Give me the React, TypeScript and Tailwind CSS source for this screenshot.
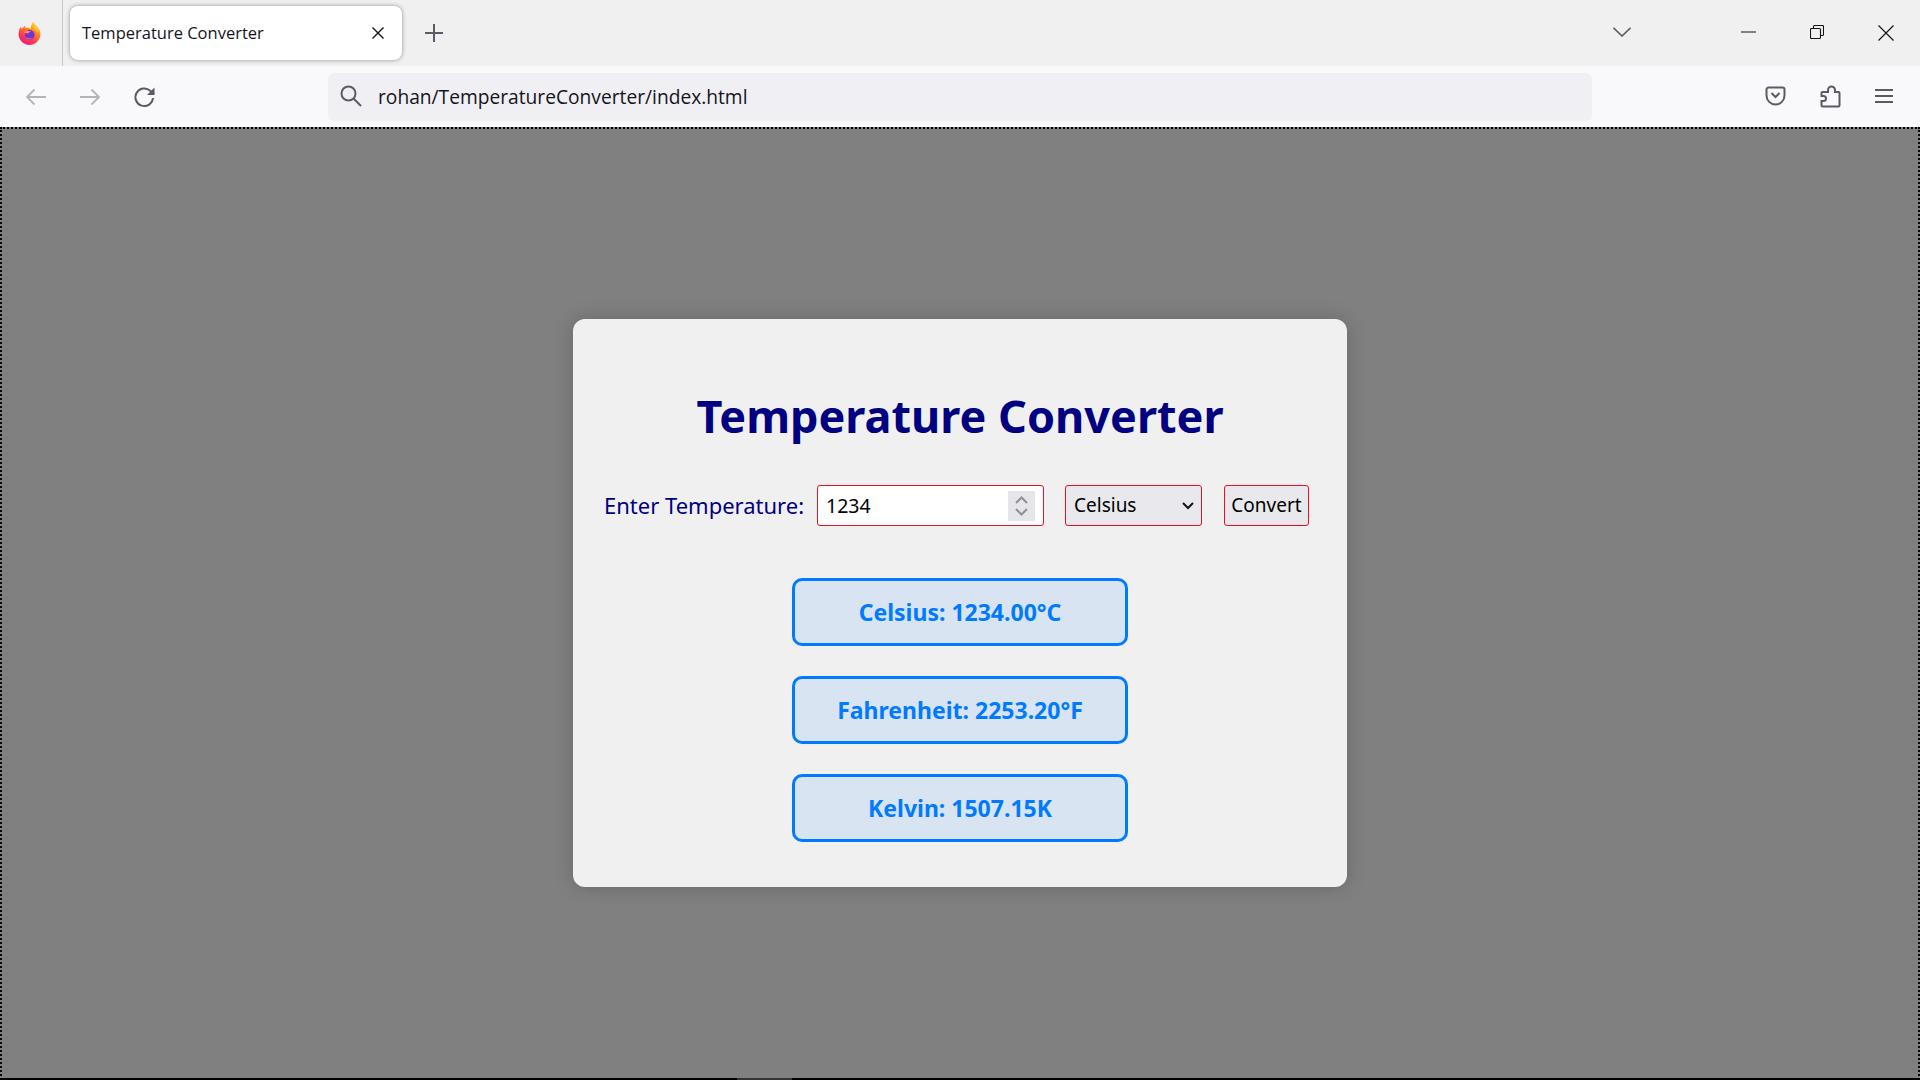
const FirefoxLogo = () => (
  <svg width="25" height="25" viewBox="0 0 24 24">
    <defs>
      <linearGradient id="ffBody" x1="0.8" y1="0" x2="0.2" y2="1">
        <stop offset="0" stopColor="#ffe226" />
        <stop offset="0.35" stopColor="#ff8a1f" />
        <stop offset="0.7" stopColor="#ff3750" />
        <stop offset="1" stopColor="#e31587" />
      </linearGradient>
    </defs>
    <path
      d="M16 1c.6 2.200 2 2.800 3.600 4.700 1.700 2.100 2.900 4.100 2.900 6.800 0 5.800-4.700 10.500-10.500 10.500s-10.500-4.700-10.500-10.500c0-2.600 .8-5 2.200-6.900 .2 1 .6 1.600 1.200 2 .6-1.600 1.900-2.700 3.600-3.100-.7 1-.7 1.800-.4 2.500 1.800-.9 3.600-.4 5 .6 .4-2.500 .8-4.800 2.400-6.600z"
      fill="url(#ffBody)"
    />
    <path d="M16.500 4c2.700 2.200 4.400 5 4 8.500-.5-2.600-2-4.500-4-6z" fill="#ffd23a" />
    <circle cx="12.200" cy="13.400" r="4.700" fill="#7233d6" />
    <path d="M6.500 11c2-1.500 5-1.800 7-.8-1.400.1-2.400.8-2.800 1.800-1.500-.3-2.900-.5-4.200-1z" fill="#ff9b2e" />
    <path d="M8 15.500c1.500 2.300 5.300 3 7.700 .8-2 .8-5 .5-7.700-.8z" fill="#ff5f8f" />
  </svg>
);

const Row = ({ label }: { label: string }) => (
  <div className="flex items-center justify-center w-[336px] h-[68px] rounded-[10px] border-[3px] border-[#007bff] bg-[#d8e4f2] text-[#007bff] text-[23px] font-bold leading-none">
    {label}
  </div>
);

const App = () => {
  return (
    <div className="relative flex flex-col w-full h-screen overflow-hidden bg-[#808080] font-['Noto_Sans','Open_Sans',sans-serif]">
      {/* tab strip */}
      <div className="flex items-center h-[66px] shrink-0 bg-[#f0f0f1]">
        <div className="flex items-center justify-center w-[63px] h-full pr-[3px] border-r border-[#c9c9cc]">
          <FirefoxLogo />
        </div>
        <div className="flex items-center justify-between w-[332px] h-[54px] ml-[7px] pl-[12px] pr-[17px] bg-white rounded-[8px] shadow-[0_0_4px_rgba(0,0,0,0.4)]">
          <span className="text-[16.500px] text-[#15141a] font-['Open_Sans',sans-serif] mt-[1px]">Temperature Converter</span>
          <svg width="14" height="14" viewBox="0 0 14 14" stroke="#15141a" strokeWidth="1.400">
            <path d="M1.500 1.500l11 11M12.500 1.500l-11 11" />
          </svg>
        </div>
        <svg className="ml-[23px]" width="18" height="18" viewBox="0 0 18 18" stroke="#5b5b66" strokeWidth="2">
          <path d="M9 0v18M0 9h18" />
        </svg>
        <div className="flex-1" />
        <svg className="mr-[110px] mt-[-2px]" width="18" height="10" viewBox="0 0 18 10" fill="none" stroke="#5b5b66" strokeWidth="1.600">
          <path d="M0.500 0.800L9 9l8.500-8.200" />
        </svg>
        <svg className="mr-[54px] mt-[-2px]" width="15" height="2" viewBox="0 0 15 2" stroke="#15141a">
          <path d="M0 1h15" />
        </svg>
        <svg className="mr-[54px] mt-[-2px]" width="14" height="14" viewBox="0 0 14 14" fill="none" stroke="#15141a" strokeWidth="1.100">
          <rect x="0.500" y="3.500" width="10" height="10" rx="1" />
          <path d="M3.500 3.500V1.500a1 1 0 0 1 1-1h8a1 1 0 0 1 1 1v8a1 1 0 0 1-1 1h-2" />
        </svg>
        <svg className="mr-[26px] mt-[-1px]" width="16" height="16" viewBox="0 0 16 16" stroke="#15141a" strokeWidth="1.200">
          <path d="M0.500 0.500l15 15M15.500 0.500l-15 15" />
        </svg>
      </div>

      {/* toolbar */}
      <div className="flex items-center h-[61px] shrink-0 bg-[#f9f9fb]">
        <svg className="ml-[25px]" width="22" height="18" viewBox="0 0 22 18" fill="none" stroke="#b4b4b9" strokeWidth="1.800">
          <path d="M21 9H2M9.500 1.500L2 9l7.500 7.500" />
        </svg>
        <svg className="ml-[32px]" width="22" height="18" viewBox="0 0 22 18" fill="none" stroke="#b4b4b9" strokeWidth="1.800">
          <path d="M1 9h19M12.500 1.500L20 9l-7.500 7.500" />
        </svg>
        <svg className="ml-[32px]" width="24" height="24" viewBox="0 0 24 24" fill="none" stroke="#5b5b66" strokeWidth="2">
          <path d="M20 13a8.800 8.800 0 1 1-2.800-7.200L21 9" />
          <path d="M21.500 2.500V10H14z" fill="#5b5b66" stroke="none" />
        </svg>
        <div className="flex items-center w-[1264px] h-[48px] ml-[171px] pl-[12px] rounded-[6px] bg-[#f0f0f4]">
          <svg className="mt-[-2px]" width="22" height="22" viewBox="0 0 22 22" fill="none" stroke="#5b5b66" strokeWidth="2">
            <circle cx="8.500" cy="8.500" r="7" />
            <path d="M13.500 13.500L21 21" />
          </svg>
          <span className="ml-[16px] mt-[2px] text-[19.200px] text-[#15141a] font-['Open_Sans',sans-serif]">rohan/TemperatureConverter/index.html</span>
        </div>
        <svg className="ml-[173px] mt-[-2px]" width="21" height="20" viewBox="0 0 21 20" fill="none" stroke="#5b5b66" strokeWidth="2">
          <path d="M3.500 1.500h14a2 2 0 0 1 2 2v6a9 9 0 0 1-18 0v-6a2 2 0 0 1 2-2z" />
          <path d="M6.500 7l4 4 4-4" />
        </svg>
        <svg className="ml-[34px]" width="21" height="23" viewBox="0 0 21 23" fill="none" stroke="#5b5b66" strokeWidth="2">
          <path d="M8 21.500H2.500a1 1 0 0 1-1-1V16h2a2.500 2.500 0 0 0 0-5h-2V8a1 1 0 0 1 1-1H8V5a3.500 3.500 0 0 1 7 0v2h3.500a1 1 0 0 1 1 1v12.500a1 1 0 0 1-1 1z" />
        </svg>
        <svg className="ml-[34px] mt-[-2px]" width="18" height="16" viewBox="0 0 18 16" stroke="#5b5b66" strokeWidth="2">
          <path d="M0 2h18M0 8h18M0 14h18" />
        </svg>
      </div>

      {/* page */}
      <div className="relative flex flex-1 items-start justify-center border-2 border-dotted border-black [border-bottom-style:solid]">
        <div className="flex flex-col items-center w-[774px] h-[568px] mt-[190px] rounded-[12px] bg-[#f0f0f0] shadow-[0_0_20px_rgba(0,0,0,0.2)]">
          <h1 className="mt-[67px] text-[45px] leading-[60px] font-bold text-[#000080] whitespace-nowrap">Temperature Converter</h1>
          <div className="flex items-center w-full mt-[39px] pl-[31px]">
            <label className="text-[22px] text-[#000080] w-[199px] whitespace-nowrap">Enter Temperature:</label>
            <div className="flex items-center w-[227px] h-[41px] ml-[14px] pl-[8px] pr-[8px] bg-white border border-[#e81123] rounded-[3px]">
              <input readOnly value="1234" className="flex-1 min-w-0 outline-none text-[19.500px] text-black" />
              <div className="flex flex-col items-center justify-center gap-[4px] w-[27px] h-[30px] bg-[#e6e6ea]">
                <svg width="13" height="8" viewBox="0 0 13 8" fill="none" stroke="#8f8f9d" strokeWidth="2">
                  <path d="M1 7l5.500-5.500L12 7" />
                </svg>
                <svg width="13" height="8" viewBox="0 0 13 8" fill="none" stroke="#8f8f9d" strokeWidth="2">
                  <path d="M1 1l5.500 5.500L12 1" />
                </svg>
              </div>
            </div>
            <div className="relative ml-[21px]">
              <select className="block appearance-none w-[137px] h-[41px] pl-[8px] bg-[#e9e9ed] border border-[#e81123] rounded-[3px] text-[19px] text-black">
                <option>Celsius</option>
              </select>
              <svg className="absolute right-[8px] top-[17px]" width="12" height="8" viewBox="0 0 12 8" fill="none" stroke="#15141a" strokeWidth="2">
                <path d="M1 1l5 5 5-5" />
              </svg>
            </div>
            <button className="w-[85px] h-[41px] ml-[22px] bg-[#e9e9ed] border border-[#e81123] rounded-[3px] text-[19px] text-black">Convert</button>
          </div>
          <div className="flex flex-col gap-[30px] mt-[52px]">
            <Row label="Celsius: 1234.00°C" />
            <Row label="Fahrenheit: 2253.20°F" />
            <Row label="Kelvin: 1507.15K" />
          </div>
        </div>
        <div className="absolute left-[735px] bottom-[-2px] w-[55px] h-[2px] bg-[#333333]" />
      </div>
    </div>
  );
};

export default App;
